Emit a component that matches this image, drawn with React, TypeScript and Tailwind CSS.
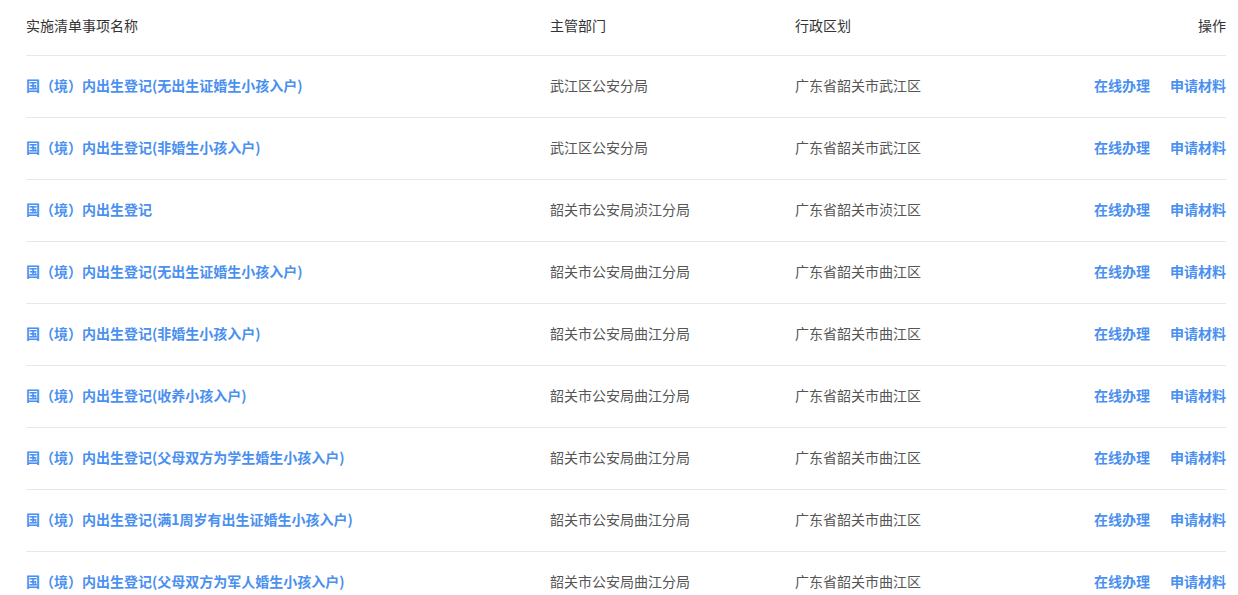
import React from "react";

const rows = [
  ["国（境）内出生登记(无出生证婚生小孩入户)", "武江区公安分局", "广东省韶关市武江区"],
  ["国（境）内出生登记(非婚生小孩入户)", "武江区公安分局", "广东省韶关市武江区"],
  ["国（境）内出生登记", "韶关市公安局浈江分局", "广东省韶关市浈江区"],
  ["国（境）内出生登记(无出生证婚生小孩入户)", "韶关市公安局曲江分局", "广东省韶关市曲江区"],
  ["国（境）内出生登记(非婚生小孩入户)", "韶关市公安局曲江分局", "广东省韶关市曲江区"],
  ["国（境）内出生登记(收养小孩入户)", "韶关市公安局曲江分局", "广东省韶关市曲江区"],
  ["国（境）内出生登记(父母双方为学生婚生小孩入户)", "韶关市公安局曲江分局", "广东省韶关市曲江区"],
  ["国（境）内出生登记(满1周岁有出生证婚生小孩入户)", "韶关市公安局曲江分局", "广东省韶关市曲江区"],
  ["国（境）内出生登记(父母双方为军人婚生小孩入户)", "韶关市公安局曲江分局", "广东省韶关市曲江区"],
];

export default function App() {
  return (
    <div
      className="w-[1238px] h-[595px] overflow-hidden bg-white pl-[26px] pr-[12px] text-[14px]"
      style={{ fontFamily: '"Microsoft YaHei", "Noto Sans CJK SC", "Noto Sans", sans-serif' }}
    >
      <div className="flex items-center h-[56px] pb-[4px] border-b border-[#e8e8e8] text-[#333]">
        <div className="w-[524px]">实施清单事项名称</div>
        <div className="w-[245px]">主管部门</div>
        <div className="flex-1">行政区划</div>
        <div className="text-right">操作</div>
      </div>
      {rows.map((r, i) => (
        <div key={i} className="flex items-center h-[62px] pb-[2px] border-b border-[#e8e8e8]">
          <div className="w-[524px] font-bold text-[#4a90f0]">{r[0]}</div>
          <div className="w-[245px] text-[#555]">{r[1]}</div>
          <div className="flex-1 text-[#555]">{r[2]}</div>
          <div className="flex gap-[20px] font-bold text-[#4a90f0]">
            <span>在线办理</span>
            <span>申请材料</span>
          </div>
        </div>
      ))}
    </div>
  );
}
